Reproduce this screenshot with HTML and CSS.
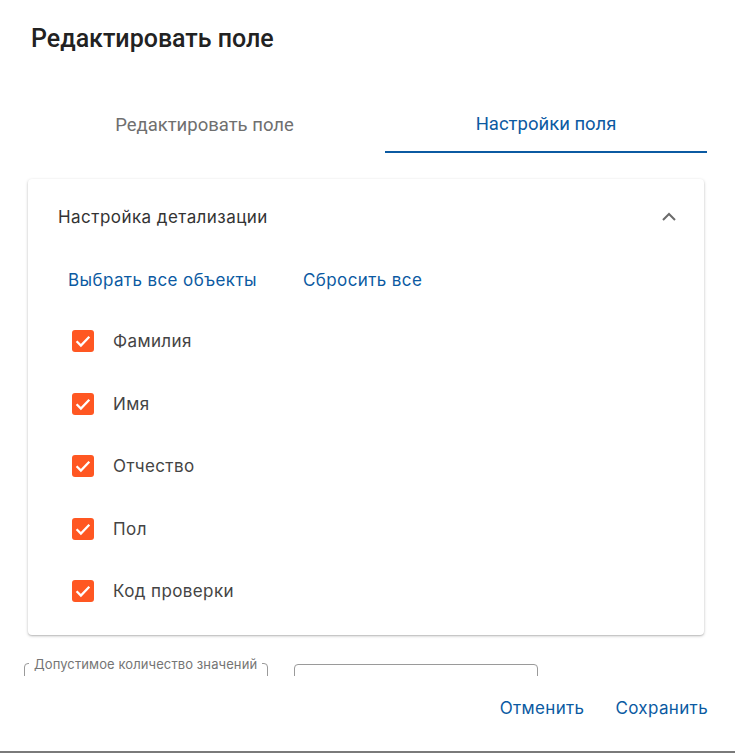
FILE: index.html
```html
<!DOCTYPE html>
<html lang="ru">
<head>
<meta charset="utf-8">
<title>Редактировать поле</title>
<link rel="stylesheet" href="styles.css">
</head>
<body>
<div class="dialog">
  <h1 class="title">Редактировать поле</h1>
  <div class="content">
    <div class="tabs">
      <div class="tab tab-first">Редактировать поле</div>
      <div class="tab tab-active">Настройки поля</div>
    </div>
    <div class="card">
      <div class="card-header">
        <span class="card-title">Настройка детализации</span>
        <svg class="chevron" width="24" height="24" viewBox="0 0 24 24"><path d="M6 15l6-6 6 6" fill="none" stroke="#6b6b6b" stroke-width="2"/></svg>
      </div>
      <div class="links">
        <span class="link">Выбрать все объекты</span>
        <span class="link">Сбросить все</span>
      </div>
      <div class="list">
        <div class="row"><span class="cb"><svg width="22" height="22" viewBox="0 0 22 22"><path d="M4.6 11.2l4.3 4.3 8.4-8.8" fill="none" stroke="#fff" stroke-width="2.3"/></svg></span><span class="label">Фамилия</span></div>
        <div class="row"><span class="cb"><svg width="22" height="22" viewBox="0 0 22 22"><path d="M4.6 11.2l4.3 4.3 8.4-8.8" fill="none" stroke="#fff" stroke-width="2.3"/></svg></span><span class="label">Имя</span></div>
        <div class="row"><span class="cb"><svg width="22" height="22" viewBox="0 0 22 22"><path d="M4.6 11.2l4.3 4.3 8.4-8.8" fill="none" stroke="#fff" stroke-width="2.3"/></svg></span><span class="label">Отчество</span></div>
        <div class="row"><span class="cb"><svg width="22" height="22" viewBox="0 0 22 22"><path d="M4.6 11.2l4.3 4.3 8.4-8.8" fill="none" stroke="#fff" stroke-width="2.3"/></svg></span><span class="label">Пол</span></div>
        <div class="row"><span class="cb"><svg width="22" height="22" viewBox="0 0 22 22"><path d="M4.6 11.2l4.3 4.3 8.4-8.8" fill="none" stroke="#fff" stroke-width="2.3"/></svg></span><span class="label">Код проверки</span></div>
      </div>
    </div>
    <div class="fields">
      <fieldset class="outlined"><legend>Допустимое количество значений</legend></fieldset>
      <div class="input"></div>
    </div>
  </div>
  <div class="actions">
    <button class="btn">Отменить</button>
    <button class="btn">Сохранить</button>
  </div>
</div>
</body>
</html>
```
FILE: styles.css
```css
html, body {
  margin: 0;
  padding: 0;
  background: #fff;
}
body {
  width: 735px;
  height: 753px;
  overflow: hidden;
  font-family: Inter, "Noto Sans", sans-serif;
}
.dialog {
  height: 751px;
  border-bottom: 2px solid #7a7a7a;
  display: flex;
  flex-direction: column;
}
.title {
  margin: 0;
  height: 80px;
  box-sizing: border-box;
  padding: 23px 31px 0;
  font-family: Roboto, sans-serif;
  font-weight: 500;
  font-size: 25px;
  line-height: 32px;
  color: #222;
}
.content {
  height: 596px;
  overflow: hidden;
  padding: 0 28px;
}
.tabs {
  display: flex;
  margin-top: 17px;
  height: 56px;
}
.tab {
  display: flex;
  align-items: center;
  justify-content: center;
  font-family: Roboto, sans-serif;
  font-size: 18.5px;
  color: #6f6f6f;
  box-sizing: border-box;
}
.tab-first {
  width: 357px;
  padding-right: 4px;
}
.tab-active {
  width: 322px;
  color: #0b5aa2;
  border-bottom: 2px solid #0b5aa2;
}
.card {
  margin: 26px 3px 0 0;
  border-radius: 4px;
  box-shadow: 0 1px 3px rgba(0,0,0,0.25), 0 1px 1px rgba(0,0,0,0.08);
  padding-bottom: 12px;
}
.card-header {
  height: 76px;
  display: flex;
  align-items: center;
  justify-content: space-between;
  padding: 0 23px 0 30px;
}
.card-title {
  font-size: 17px;
  letter-spacing: 0.45px;
  color: #333;
}
.links {
  height: 50px;
  display: flex;
  align-items: center;
  gap: 46px;
  padding-left: 40px;
  margin-bottom: 5px;
}
.link {
  font-size: 17px;
  letter-spacing: 0.4px;
  color: #0b5aa2;
}
.row {
  height: 62.5px;
  display: flex;
  align-items: center;
  padding-left: 44px;
}
.cb {
  width: 22px;
  height: 22px;
  border-radius: 3px;
  background: #ff5722;
  display: block;
}
.cb svg {
  display: block;
}
.label {
  margin-left: 19px;
  font-size: 17px;
  letter-spacing: 0.4px;
  color: #444;
}
.fields {
  display: flex;
  margin: 22px 0 0 -4px;
  gap: 26px;
}
.outlined {
  margin: 0;
  width: 244px;
  height: 40px;
  box-sizing: border-box;
  border: 1px solid #9a9a9a;
  border-radius: 4px;
  padding: 0 4px;
}
.outlined legend {
  font-size: 13px;
  letter-spacing: 0.1px;
  color: #757575;
  padding: 0 5px;
  line-height: 14px;
}
.input {
  margin-top: 7px;
  width: 244px;
  height: 40px;
  box-sizing: border-box;
  border: 1px solid #9a9a9a;
  border-radius: 4px;
}
.actions {
  display: flex;
  justify-content: flex-end;
  gap: 15px;
  padding: 14px 19px 0 0;
}
.btn {
  border: 0;
  background: none;
  font-family: Inter, sans-serif;
  font-size: 17px;
  letter-spacing: 0.35px;
  color: #0b5aa2;
  padding: 6px 8px;
  line-height: 24px;
}
```
